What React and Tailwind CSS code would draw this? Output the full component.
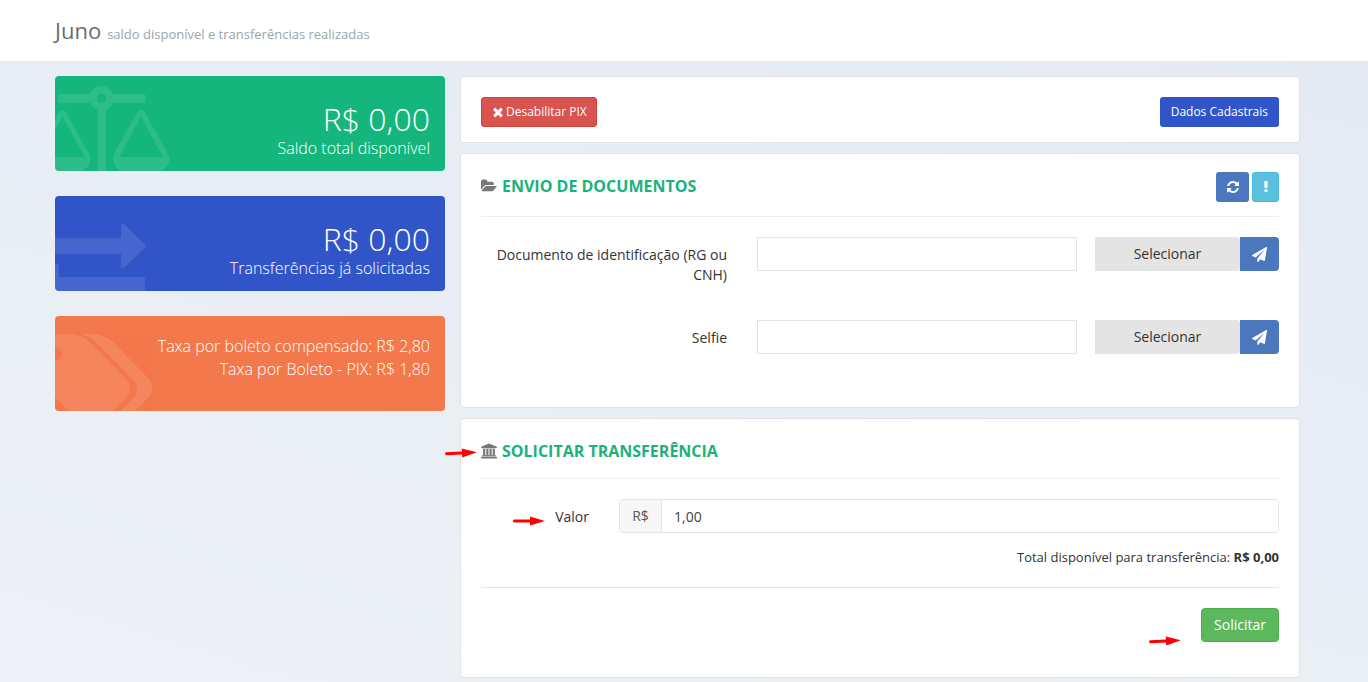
import React, { useState } from "react";

/* ================= CONSTANTS ================= */

const icons = {
  times: {
    box: "0 0 1792 1792",
    d: "M1490 1322q0 40-28 68l-136 136q-28 28-68 28t-68-28l-294-294-294 294q-28 28-68 28t-68-28l-136-136q-28-28-28-68t28-68l294-294-294-294q-28-28-28-68t28-68l136-136q28-28 68-28t68 28l294 294 294-294q28-28 68-28t68 28l136 136q28 28 28 68t-28 68l-294 294 294 294q28 28 28 68z",
  },
  refresh: {
    box: "0 0 1792 1792",
    d: "M1639 1056q0 5-1 7-64 268-268 434.5t-478 166.5q-146 0-282.5-55t-243.5-157l-129 129q-19 19-45 19t-45-19-19-45v-448q0-26 19-45t45-19h448q26 0 45 19t19 45-19 45l-137 137q71 66 161 102t187 36q134 0 250-65t186-179q11-17 53-117 8-23 30-23h192q13 0 22.5 9.5t9.5 22.5zm25-800v448q0 26-19 45t-45 19h-448q-26 0-45-19t-19-45 19-45l138-138q-148-137-349-137-134 0-250 65t-186 179q-11 17-53 117-8 23-30 23h-199q-13 0-22.5-9.5t-9.5-22.5v-7q65-268 270-434.5t480-166.5q146 0 284 55.5t245 156.5l130-129q19-19 45-19t45 19 19 45z",
  },
  exclamation: {
    box: "0 0 1792 1792",
    d: "M1088 1248v224q0 26-19 45t-45 19h-256q-26 0-45-19t-19-45v-224q0-26 19-45t45-19h256q26 0 45 19t19 45zm30-1056l-28 768q-1 26-20.5 45t-45.5 19h-256q-26 0-45.5-19t-20.5-45l-28-768q-1-26 17.5-45t44.5-19h320q26 0 44.5 19t17.5 45z",
  },
  plane: {
    box: "0 0 1792 1792",
    d: "M1764 11q33 24 27 64l-256 1536q-5 29-32 45-14 8-31 8-11 0-24-5l-453-185-242 295q-18 23-49 23-13 0-22-4-19-7-30.5-23.5t-11.5-36.5v-349l864-1059-1069 925-395-162q-37-14-40-55-2-40 32-59l1664-960q15-9 32-9 20 0 36 11z",
  },
  folder: {
    box: "0 128 1920 1536",
    d: "M1879 952q0 31-31 66l-336 396q-43 51-120.5 86.5t-143.5 35.5h-1088q-34 0-60.5-13t-26.5-43q0-31 31-66l336-396q43-51 120.5-86.5t143.5-35.5h1088q34 0 60.5 13t26.5 43zm-343-344v160h-832q-94 0-197 47.5t-164 119.5l-337 396-5 6q0-4-.5-12.5t-.5-12.5v-960q0-92 66-158t158-66h320q92 0 158 66t66 158v32h544q92 0 158 66t66 158z",
  },
  bank: {
    box: "0 0 1920 1792",
    d: "M960 0l960 384v128h-128q0 26-20.5 45t-48.5 19h-1526q-28 0-48.5-19t-20.5-45h-128v-128zm-704 640h256v768h128v-768h256v768h128v-768h256v768h128v-768h256v768h59q28 0 48.5 19t20.5 45v64h-1664v-64q0-26 20.5-45t48.5-19h59v-768zm1595 960q28 0 48.5 19t20.5 45v128h-1920v-128q0-26 20.5-45t48.5-19h1782z",
  },
};

const documents = [
  { id: "identificacao", label: "Documento de identificação (RG ou CNH)" },
  { id: "selfie", label: "Selfie" },
];

/* ================= PAGE ================= */

export default function App() {
  const [valor, setValor] = useState("1,00");

  return (
    <div className="min-h-screen bg-linear-[197deg,#e4eaf2,#e8edf6_50%,#eaeff4_62%,#edf1f7] font-['Open_Sans',sans-serif] text-sm text-[#333]">
      <header className="bg-white pt-[15px] pb-4 pl-[55px] pr-[68px]">
        <h1 className="flex items-baseline gap-[6px] text-[22px] leading-[30px] text-[#6a6c6f]">
          Juno <small className="text-[13px] leading-5 text-[#98a6ad]">saldo disponível e transferências realizadas</small>
        </h1>
      </header>

      <main className="grid grid-cols-[13fr_28fr] items-start gap-[15px] pt-[15px] pb-1 pl-[55px] pr-[68px]">
        <div className="flex flex-col gap-[25px]">
          <StatCard color="bg-[#15b67d]" art={<ScaleArt />}>
            <p className="text-[32px] leading-[38px]">R$ 0,00</p>
            <p className="leading-5">Saldo total disponível</p>
          </StatCard>
          <StatCard color="bg-[#3155c9]" art={<ExchangeArt />}>
            <p className="text-[32px] leading-[38px]">R$ 0,00</p>
            <p className="leading-5">Transferências já solicitadas</p>
          </StatCard>
          <StatCard color="bg-[#f3784b]" art={<TagsArt />}>
            <p className="-mt-[5px] leading-[23px]">Taxa por boleto compensado: R$ 2,80</p>
            <p className="leading-[23px]">Taxa por Boleto - PIX: R$ 1,80</p>
          </StatCard>
        </div>

        <div className="flex flex-col gap-[10px]">
          {/* Actions */}
          <Panel className="flex justify-between pb-[15px]">
            <button type="button" className="flex h-[30px] items-center gap-[1px] rounded-[3px] border border-[#d43f3a] bg-[#d9534f] px-[9px] text-xs text-white">
              <Icon name="times" className="size-[14px]" />
              Desabilitar PIX
            </button>
            <button type="button" className="h-[30px] rounded-[3px] bg-[#3155c9] px-[11px] text-xs text-white">
              Dados Cadastrais
            </button>
          </Panel>

          {/* Documents */}
          <Panel className="pb-9">
            <div className="flex items-start justify-between border-b border-[#eee] pb-[14px]">
              <Heading icon="folder">Envio de documentos</Heading>
              <div className="-mt-[2px] flex gap-[3px]">
                <button type="button" aria-label="Atualizar" className="flex h-[30px] w-[33px] items-center justify-center rounded-[3px] bg-[#4a77be] text-white">
                  <Icon name="refresh" className="size-[14px]" />
                </button>
                <button type="button" aria-label="Informações" className="flex h-[30px] w-[27px] items-center justify-center rounded-[3px] border border-[#46b8da] bg-[#5bc0de] text-white">
                  <Icon name="exclamation" className="size-[14px]" />
                </button>
              </div>
            </div>
            <div className="mt-5 flex flex-col gap-8">
              {documents.map((doc) => (
                <DocumentRow key={doc.id} {...doc} />
              ))}
            </div>
          </Panel>

          {/* Transfer */}
          <Panel className="relative pb-[35px]">
            <Arrow className="-left-4 top-[29px] -rotate-3" />
            <div className="border-b border-[#eee] pb-[15px]">
              <Heading icon="bank">Solicitar transferência</Heading>
            </div>
            <form onSubmit={(e) => e.preventDefault()}>
              <div className="mt-5 flex">
                <div className="relative mr-[30px] w-[108px] pt-2 text-right">
                  <Arrow className="left-8 top-[17px]" />
                  <label htmlFor="valor" className="leading-5">Valor</label>
                </div>
                <div className="flex h-[34px] flex-1 overflow-hidden rounded border border-[#e4e4e4]">
                  <span className="flex w-[42px] items-center justify-center border-r border-[#e4e4e4] bg-[#f7f7f7] text-sm text-[#555]">R$</span>
                  <input
                    id="valor"
                    type="text"
                    value={valor}
                    onChange={(e) => setValor(e.target.value)}
                    className="min-w-0 flex-1 bg-white px-3 pt-[2px] text-[#444] outline-none"
                  />
                </div>
              </div>
              <p className="mt-[15px] border-b border-[#e4e4e4] pb-5 text-right text-[13px] leading-[19px]">
                Total disponível para transferência: <strong className="font-bold">R$ 0,00</strong>
              </p>
              <div className="relative mt-5 flex justify-end">
                <Arrow className="right-[98px] top-7 -rotate-3" />
                <button type="submit" className="h-[34px] rounded border border-[#4cae4c] bg-[#5cb85c] px-3 text-white">
                  Solicitar
                </button>
              </div>
            </form>
          </Panel>
        </div>
      </main>
    </div>
  );
}

/* ================= COMPONENTS ================= */

const Icon = ({ name, className }) => (
  <svg viewBox={icons[name].box} fill="currentColor" aria-hidden="true" className={className}>
    <path d={icons[name].d} />
  </svg>
);

const Panel = ({ className, children }) => (
  <section className={`rounded border border-[#e1e3e6] bg-white px-5 pt-5 ${className}`}>{children}</section>
);

const Heading = ({ icon, children }) => (
  <h2 className="flex items-center gap-[5px] text-base leading-6 font-bold text-[#1ab27c] uppercase">
    <Icon name={icon} className="size-4 text-[#777]" />
    {children}
  </h2>
);

const StatCard = ({ color, art, children }) => (
  <section className={`relative h-[95px] overflow-hidden rounded px-[15px] pt-6 text-right text-base font-light text-white ${color}`}>
    {art}
    {children}
  </section>
);

const DocumentRow = ({ id, label }) => (
  <div className="flex min-h-[51px] items-start">
    <label htmlFor={id} className="mr-[30px] w-[246px] pt-2 text-right leading-5">
      {label}
    </label>
    <input id={id} type="text" className="h-[34px] min-w-0 flex-1 border border-[#e4e4e4] bg-white px-3 outline-none" />
    <div className="ml-[18px] flex w-[184px]">
      <button type="button" className="h-[34px] flex-1 rounded-r bg-[#e4e4e4]">Selecionar</button>
      <button type="button" aria-label={`Enviar ${label}`} className="flex h-[34px] w-[39px] items-center justify-center rounded-r bg-[#4a77be] text-white">
        <Icon name="plane" className="size-[15px]" />
      </button>
    </div>
  </div>
);

const Arrow = ({ className }) => (
  <svg viewBox="0 0 32 10" fill="#f00" aria-hidden="true" className={`absolute h-[10px] w-8 ${className}`}>
    <path d="M1.5 3.5H17V0.500L32 5 17 9.500V6.5H1.5a1.5 1.5 0 0 1 0-3z" />
  </svg>
);

const Art = ({ children }) => (
  <svg viewBox="0 0 130 95" fill="#fff" aria-hidden="true" className="absolute top-0 left-0 h-[95px] w-[130px] opacity-10">
    {children}
  </svg>
);

const ScaleArt = () => (
  <Art>
    <path
      fillRule="evenodd"
      d="M5 18H35.5A12 12 0 0 1 58 18H88.500Q90.500 18 90.500 20V25Q90.500 27 88.500 27H58A12 12 0 0 1 51 33.500V95H42.500V33.500A12 12 0 0 1 35.500 27H5Q3 27 3 25V20Q3 18 5 18zM46.700 17.600a4.700 4.700 0 1 0 .01 0z"
    />
    <path fillRule="evenodd" d="M82.500 36Q86 32 89.500 36L113 78Q116 84 112 90 108 95 102 97H70Q64 95 60 90 57 84 59 78zM86 40.500L64 81H108z" />
    <path fillRule="evenodd" d="M4 36Q7.500 32 11 36L34 78Q37 84 33 90 29 95 23 97H-9Q-15 95-19 90-22 84-20 78zM7.500 40.500L-15 81H30z" />
  </Art>
);

const ExchangeArt = () => (
  <Art>
    <path d="M0 42H66V30Q66 28 68 28 69 28 70 29L90 48.500Q91.500 50 90 51.500L70 71Q69 72 68 72 66 72 66 70V58H0z" />
    <path d="M0 67.500H2Q4 67.500 4 70V81H88Q90 81 90 83V95H0z" />
  </Art>
);

const TagsArt = () => (
  <Art>
    <path fillRule="evenodd" d="M0 18H14Q26 18 35 26L71 63Q75 67 75 73.500 75 78 71 82L58 95H14L0 81V45A7 7 0 0 0 0 31z" />
    <path d="M25 18H37Q49 18 58 26L94 63Q98 68 97 74 97 78 94 81L80 95H65L79 81Q82 78 82 73.500 82 68 79 65L43 28Q35 20 25 18z" />
  </Art>
);
